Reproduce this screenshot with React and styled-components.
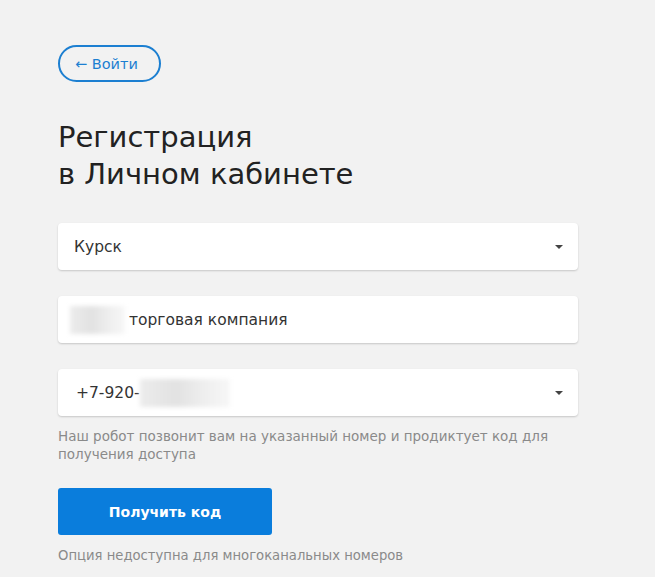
import React from "react";
import styled, { createGlobalStyle } from "styled-components";

const GlobalStyle = createGlobalStyle`
  html, body {
    margin: 0;
    padding: 0;
    background: #f2f2f2;
    font-family: "DejaVu Sans", "Noto Sans", sans-serif;
  }
`;

const Page = styled.div`
  width: 655px;
  min-height: 577px;
  padding: 45px 0 0 58px;
  box-sizing: border-box;
  background: #f2f2f2;
`;

const BackButton = styled.button`
  display: inline-flex;
  align-items: center;
  gap: 5px;
  height: 37px;
  padding: 0 21px 0 15px;
  border: 2px solid #1c7fd1;
  border-radius: 19px;
  background: transparent;
  color: #1c7fd1;
  font-family: "DejaVu Sans", sans-serif;
  font-size: 14.5px;
  cursor: pointer;
`;

const Title = styled.h1`
  margin: 37px 0 30px;
  font-size: 29px;
  font-weight: 400;
  line-height: 37px;
  color: #222;
`;

const Form = styled.div`
  width: 520px;
  display: flex;
  flex-direction: column;
`;

const Field = styled.div`
  height: 47px;
  display: flex;
  align-items: center;
  padding: 0 ${(p) => (p.$select ? "15px" : "16px")} 0 ${(p) => p.$pad || "16px"};
  margin-bottom: ${(p) => p.$gap || "26px"};
  background: #fff;
  border-radius: 4px;
  box-shadow: 0 1px 2px rgba(0, 0, 0, 0.18);
  font-size: 15.5px;
  color: #333;
`;

const Value = styled.span`
  flex: 1;
  display: flex;
  align-items: center;
`;

const Caret = styled.span`
  width: 0;
  height: 0;
  border-left: 4px solid transparent;
  border-right: 4px solid transparent;
  border-top: 4px solid #444;
`;

const Blur = styled.span`
  display: inline-block;
  width: ${(p) => p.$w}px;
  height: 28px;
  margin-right: ${(p) => p.$mr || 0}px;
  background: linear-gradient(90deg, #ececec, #e2e2e2 40%, #eeeeee 70%, #f7f7f7);
  filter: blur(2px);
`;

const Hint = styled.p`
  margin: ${(p) => p.$m || "0"};
  font-size: ${(p) => p.$size || "13.5px"};
  line-height: 18px;
  color: #8a8a8a;
`;

const Submit = styled.button`
  width: 214px;
  height: 47px;
  margin: 25px 0 0;
  border: none;
  border-radius: 3px;
  background: #0a7ddc;
  color: #fff;
  font-family: "DejaVu Sans", sans-serif;
  font-size: 14px;
  font-weight: 700;
  cursor: pointer;
`;

export default function App() {
  return (
    <>
      <GlobalStyle />
      <Page>
        <BackButton>← Войти</BackButton>
        <Title>
          Регистрация
          <br />в Личном кабинете
        </Title>
        <Form>
          <Field $select>
            <Value>Курск</Value>
            <Caret />
          </Field>
          <Field $pad="12px">
            <Value>
              <Blur $w={55} $mr={4} />
              торговая компания
            </Value>
          </Field>
          <Field $select $pad="18px" $gap="11px">
            <Value>
              +7-920-
              <Blur $w={90} />
            </Value>
            <Caret />
          </Field>
          <Hint>
            Наш робот позвонит вам на указанный номер и продиктует код для
            получения доступа
          </Hint>
          <Submit>Получить код</Submit>
          <Hint $m="12px 0 0" $size="13.2px">
            Опция недоступна для многоканальных номеров
          </Hint>
        </Form>
      </Page>
    </>
  );
}
